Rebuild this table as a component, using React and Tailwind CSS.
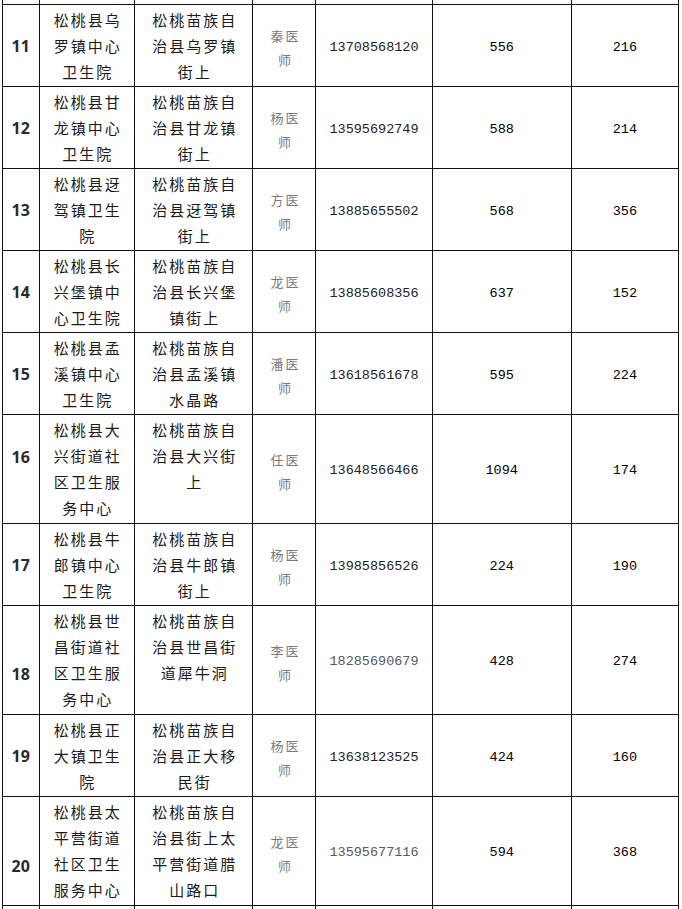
import React from 'react';

const rows = [
  { no: '11', name: ['松桃县乌', '罗镇中心', '卫生院'], addr: ['松桃苗族自', '治县乌罗镇', '街上'], doc: '秦', phone: '13708568120', a: '556', b: '216', h: 'h-[82px]', noPad: 'pt-[28px]' },
  { no: '12', name: ['松桃县甘', '龙镇中心', '卫生院'], addr: ['松桃苗族自', '治县甘龙镇', '街上'], doc: '杨', phone: '13595692749', a: '588', b: '214', h: 'h-[82px]', noPad: 'pt-[28px]' },
  { no: '13', name: ['松桃县迓', '驾镇卫生', '院'], addr: ['松桃苗族自', '治县迓驾镇', '街上'], doc: '方', phone: '13885655502', a: '568', b: '356', h: 'h-[82px]', noPad: 'pt-[28px]' },
  { no: '14', name: ['松桃县长', '兴堡镇中', '心卫生院'], addr: ['松桃苗族自', '治县长兴堡', '镇街上'], doc: '龙', phone: '13885608356', a: '637', b: '152', h: 'h-[82px]', noPad: 'pt-[28px]' },
  { no: '15', name: ['松桃县孟', '溪镇中心', '卫生院'], addr: ['松桃苗族自', '治县孟溪镇', '水晶路'], doc: '潘', phone: '13618561678', a: '595', b: '224', h: 'h-[82px]', noPad: 'pt-[28px]' },
  { no: '16', name: ['松桃县大', '兴街道社', '区卫生服', '务中心'], addr: ['松桃苗族自', '治县大兴街', '上'], doc: '任', phone: '13648566466', a: '1094', b: '174', h: 'h-[109px]', noPad: 'pt-[29px]' },
  { no: '17', name: ['松桃县牛', '郎镇中心', '卫生院'], addr: ['松桃苗族自', '治县牛郎镇', '街上'], doc: '杨', phone: '13985856526', a: '224', b: '190', h: 'h-[82px]', noPad: 'pt-[28px]' },
  { no: '18', name: ['松桃县世', '昌街道社', '区卫生服', '务中心'], addr: ['松桃苗族自', '治县世昌街', '道犀牛洞'], doc: '李', phone: '18285690679', a: '428', b: '274', h: 'h-[109px]', noPad: 'pt-[55px]', grey: true },
  { no: '19', name: ['松桃县正', '大镇卫生', '院'], addr: ['松桃苗族自', '治县正大移', '民街'], doc: '杨', phone: '13638123525', a: '424', b: '160', h: 'h-[82px]', noPad: 'pt-[28px]' },
  { no: '20', name: ['松桃县太', '平营街道', '社区卫生', '服务中心'], addr: ['松桃苗族自', '治县街上太', '平营街道腊', '山路口'], doc: '龙', phone: '13595677116', a: '594', b: '368', h: 'h-[109px]', noPad: 'pt-[56px]', grey: true },
];

const cjk = "font-['Noto_Sans_CJK_SC','Noto_Sans',sans-serif]";
const mono = "font-['Liberation_Mono',monospace]";
const cell = 'border-[1.5px] border-[#111] p-0';
const mid = 'border-[1.5px] border-[#111] px-0 pt-[6px] pb-0 align-middle text-center';

function Lines({ lines }) {
  return (
    <div className="flex flex-col items-center pt-[2px]">
      {lines.map((l, i) => (
        <div key={i} className="h-[26px] leading-[26px] tracking-[2px] pl-[2px] whitespace-nowrap">{l}</div>
      ))}
    </div>
  );
}

export default function App() {
  return (
    <div className="bg-white w-[682px] h-[909px] overflow-hidden">
      <table className={`ml-[2px] w-[677px] table-fixed border-collapse text-[#1a1a1a] ${cjk}`}>
        <colgroup>
          <col className="w-[36.5px]" />
          <col className="w-[95.5px]" />
          <col className="w-[118px]" />
          <col className="w-[63px]" />
          <col className="w-[116px]" />
          <col className="w-[139px]" />
          <col className="w-[107px]" />
        </colgroup>
        <tbody>
          <tr className="h-[4px]">
            {[0, 1, 2, 3, 4, 5, 6].map(i => (
              <td key={i} className="border-x-[1.5px] border-[#111] p-0" />
            ))}
          </tr>
          {rows.map(r => (
            <tr key={r.no} className={r.h}>
              <td className={`${cell} align-top text-center ${r.noPad}`}>
                <span className="font-['Noto_Sans',sans-serif] font-bold text-[16px] leading-[26px] text-[#2b2b2b]">{r.no}</span>
              </td>
              <td className={`${cell} align-top text-[15px]`}><Lines lines={r.name} /></td>
              <td className={`${cell} align-top text-[15px]`}><Lines lines={r.addr} /></td>
              <td className={`${mid} text-[13px] text-[#7a7a7a]`}>
                <div className="leading-[24px] tracking-[2px] pl-[2px]">{r.doc}医</div>
                <div className="leading-[24px]">师</div>
              </td>
              <td className={`${mid} ${mono} text-[13.5px] ${r.grey ? 'text-[#5a5a5a]' : 'text-[#222]'}`}>{r.phone}</td>
              <td className={`${mid} ${mono} text-[13.5px] text-black`}>{r.a}</td>
              <td className={`${mid} ${mono} text-[13.5px] text-black`}>{r.b}</td>
            </tr>
          ))}
          <tr className="h-[40px]">
            {[0, 1, 2, 3, 4, 5, 6].map(i => (
              <td key={i} className={cell} />
            ))}
          </tr>
        </tbody>
      </table>
    </div>
  );
}
